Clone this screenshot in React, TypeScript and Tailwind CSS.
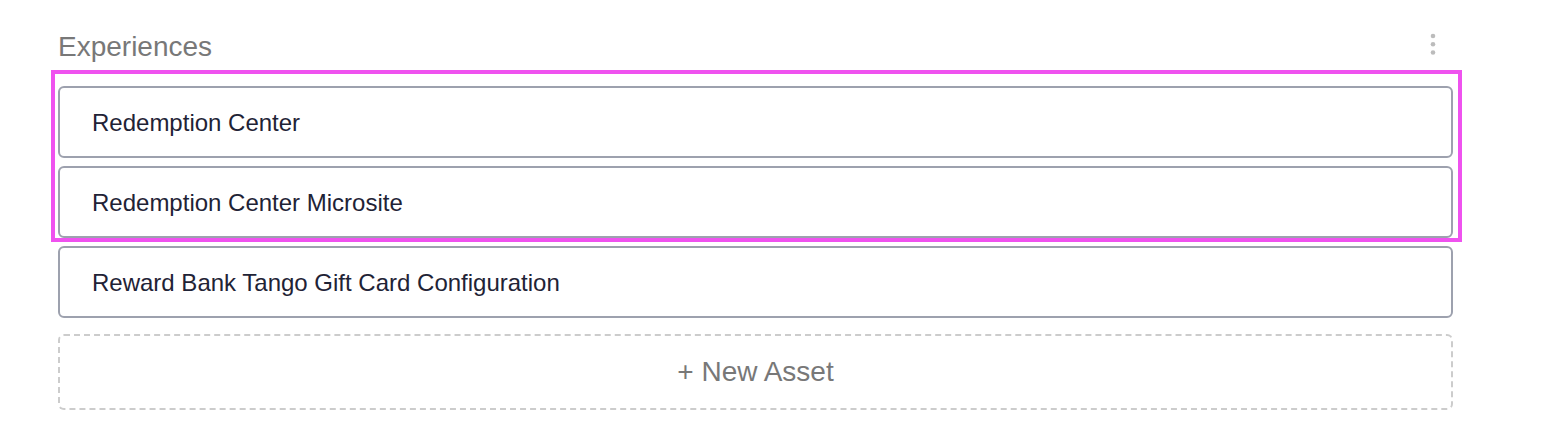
import React from "react";

const Card = ({ label }: { label: string }) => (
  <div className="h-[72px] flex items-center rounded-[6px] border-2 border-[#9da1ae] bg-white pl-[32px] text-[24px] text-[#1f2336]">
    <span className="pt-[2px]">{label}</span>
  </div>
);

export default function App() {
  return (
    <div
      className="w-[1558px] h-[442px] bg-white pl-[58px] pr-[105px] pt-[31px]"
      style={{ fontFamily: '"Liberation Sans", Arial, Helvetica, sans-serif' }}
    >
      <div className="flex items-start justify-between h-[32px]">
        <h2 className="text-[28px] leading-[32px] text-[#787878] font-normal">Experiences</h2>
        <svg width="6" height="22" viewBox="0 0 6 22" className="mt-[2px] mr-[17px]">
          <circle cx="3" cy="3" r="2.3" fill="#bcbcbc" />
          <circle cx="3" cy="11.3" r="2.3" fill="#bcbcbc" />
          <circle cx="3" cy="19.5" r="2.3" fill="#bcbcbc" />
        </svg>
      </div>
      <div className="relative mt-[23px]">
        <div className="flex flex-col gap-2">
          <Card label="Redemption Center" />
          <Card label="Redemption Center Microsite" />
        </div>
        <div className="pointer-events-none absolute -top-[16px] -left-[7px] -right-[9px] -bottom-[4px] border-4 border-[#ef52ef]" />
      </div>
      <div className="mt-2">
        <Card label="Reward Bank Tango Gift Card Configuration" />
      </div>
      <div className="mt-[16px] h-[76px] flex items-center justify-center rounded-[6px] border-2 border-dashed border-[#cccccc] text-[28px] text-[#787878]">
        + New Asset
      </div>
    </div>
  );
}
